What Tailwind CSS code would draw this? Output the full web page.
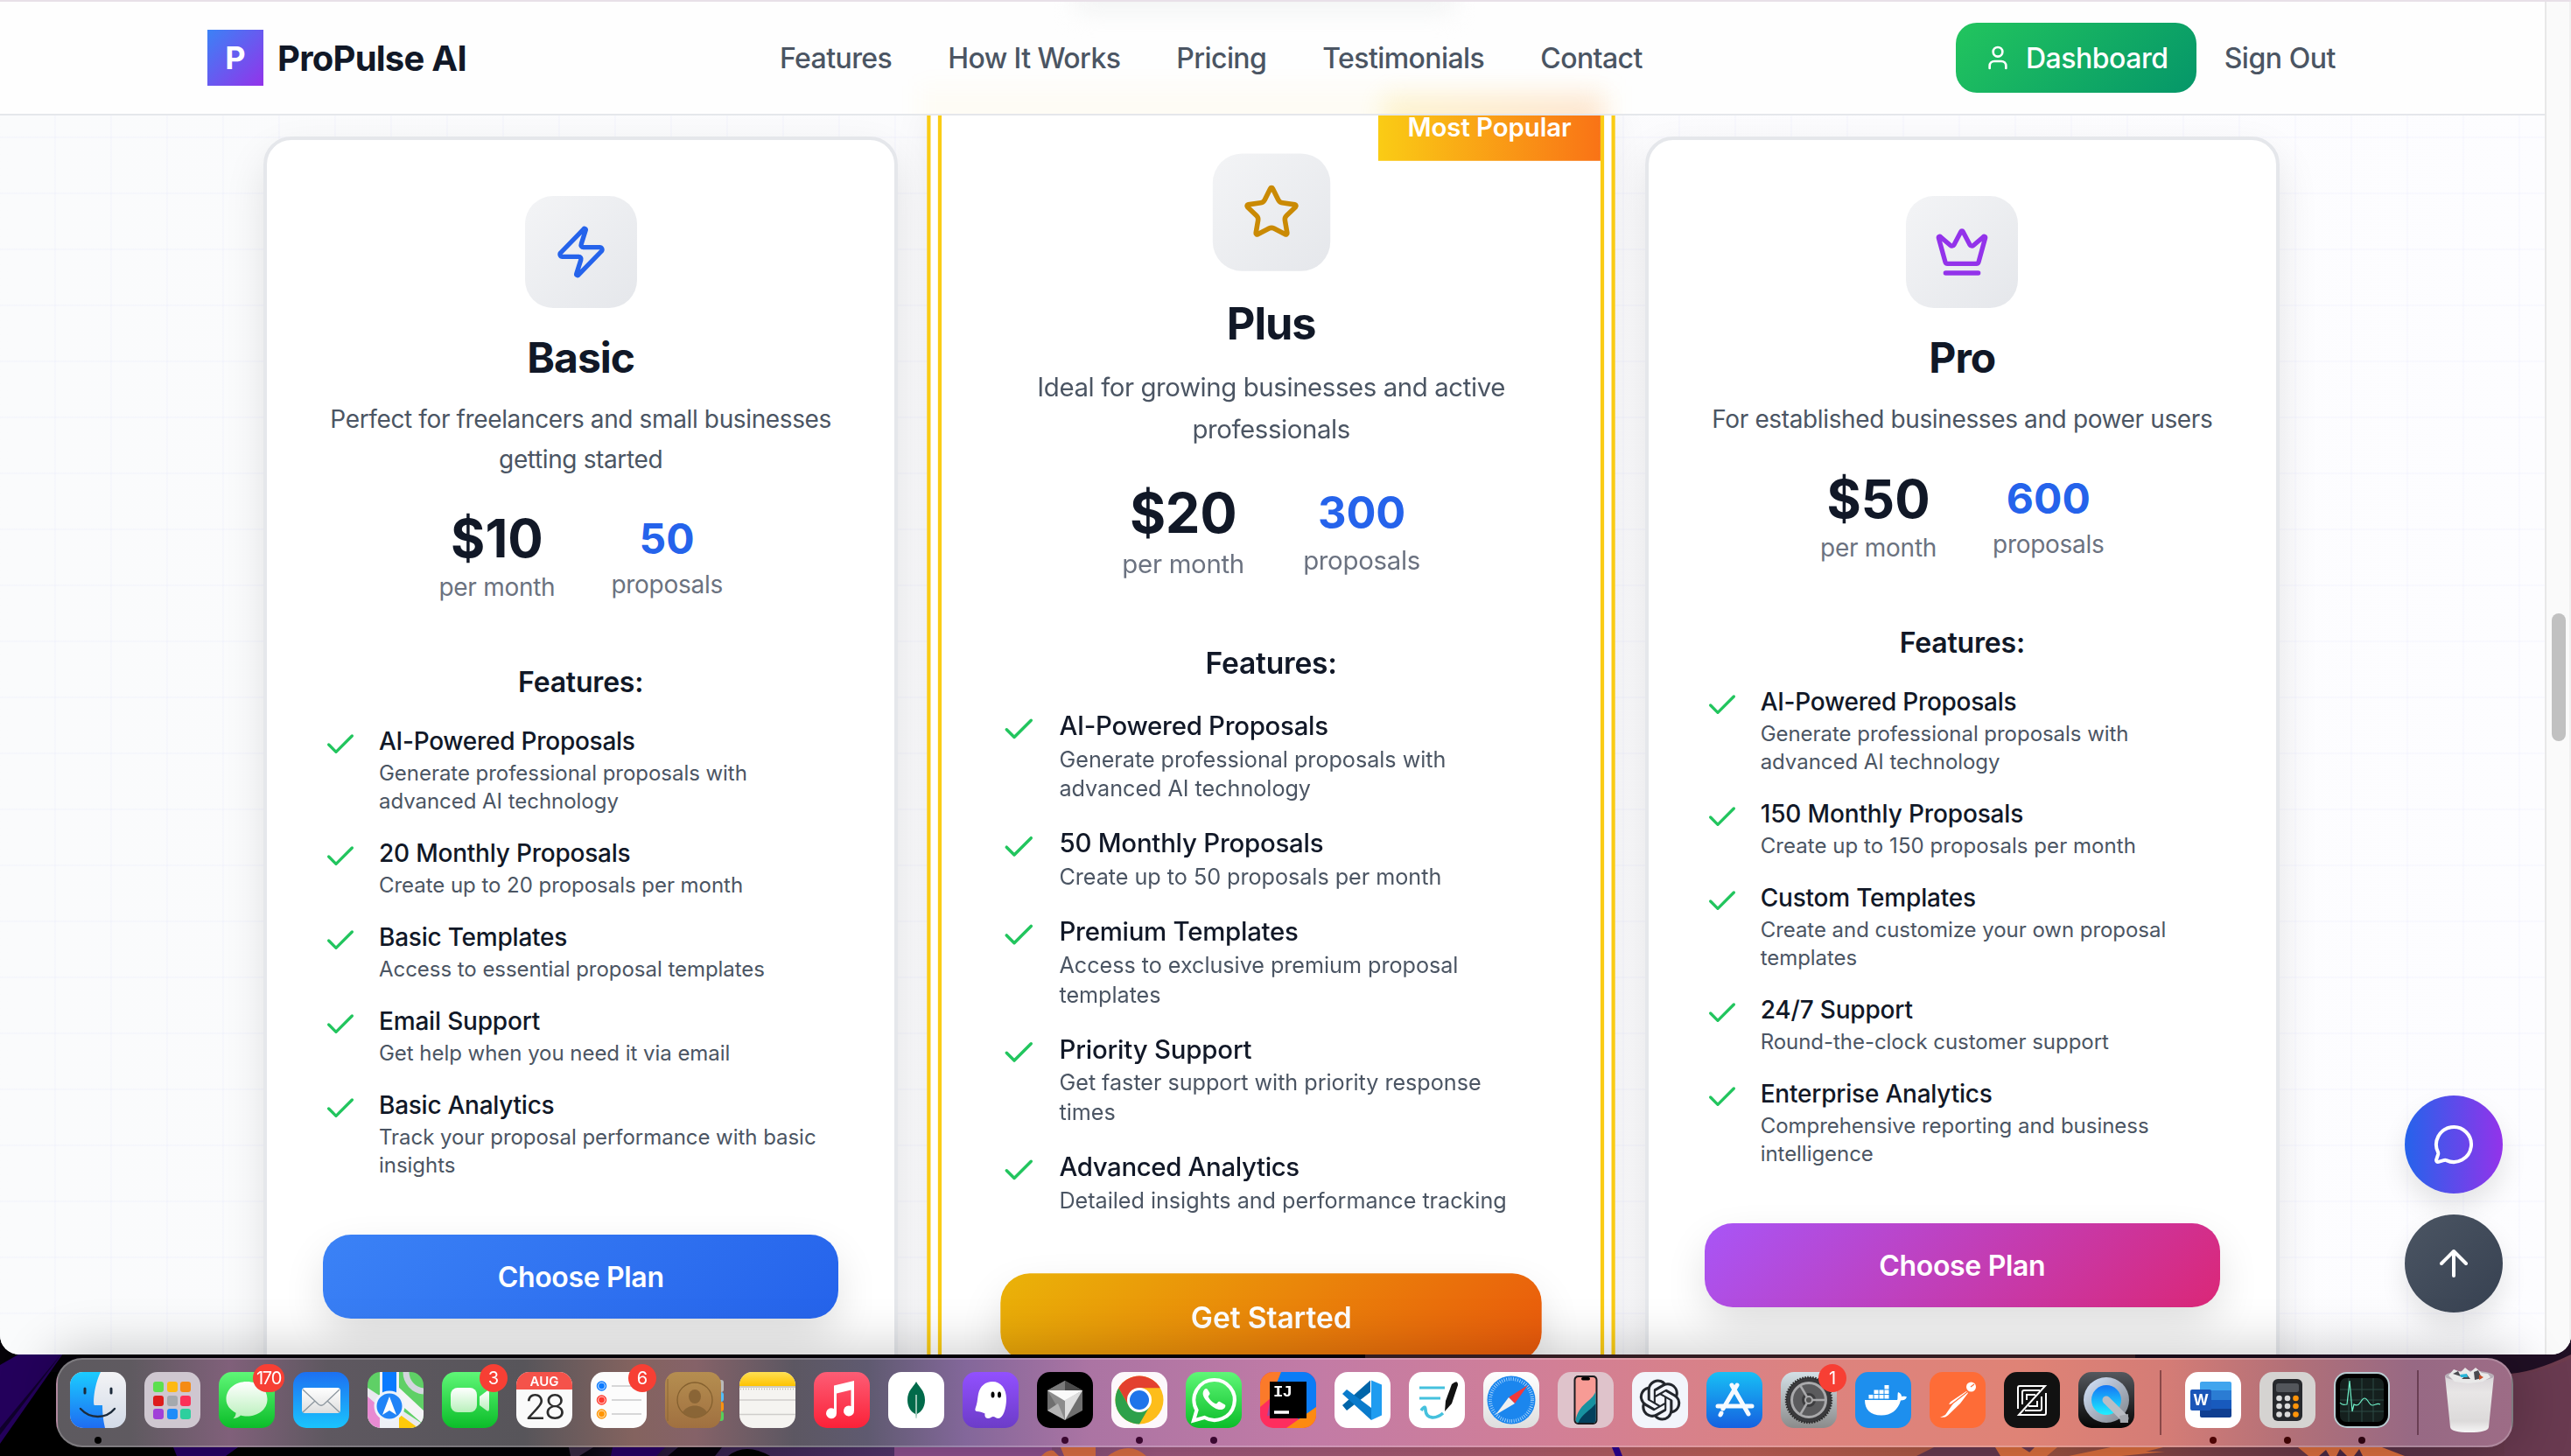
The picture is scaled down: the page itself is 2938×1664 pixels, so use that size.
<!DOCTYPE html>
<html lang="en">
<head>
<meta charset="utf-8">
<title>ProPulse AI - Pricing</title>
<script src="https://cdn.jsdelivr.net/npm/@tailwindcss/browser@4"></script>
</head>
<body class="overflow-hidden bg-black">
<!-- shared symbols and gradients -->
<svg class="absolute size-0">
  <symbol id="check" viewBox="0 0 24 24"><path d="M20 6 9 17l-5-5" fill="none" stroke="#22c55e" stroke-width="2" stroke-linecap="round" stroke-linejoin="round"/></symbol>
  <defs>
    <linearGradient id="gGreen" x1="0" y1="0" x2="0" y2="1"><stop offset="0" stop-color="#5ff777"/><stop offset="1" stop-color="#0bbd29"/></linearGradient>
    <linearGradient id="gBlueUp" x1="0" y1="0" x2="0" y2="1"><stop offset="0" stop-color="#1d70f2"/><stop offset="1" stop-color="#1ac4fd"/></linearGradient>
    <linearGradient id="gStore" x1="0" y1="0" x2="0" y2="1"><stop offset="0" stop-color="#18bff5"/><stop offset="1" stop-color="#1560e0"/></linearGradient>
    <linearGradient id="gWhite" x1="0" y1="0" x2="0" y2="1"><stop offset="0" stop-color="#ffffff"/><stop offset="1" stop-color="#dedede"/></linearGradient>
    <linearGradient id="gBubble" x1="0" y1="0" x2="0" y2="1"><stop offset="0" stop-color="#ffffff"/><stop offset="1" stop-color="#b9f0bb"/></linearGradient>
    <linearGradient id="gRed" x1="0" y1="0" x2="0" y2="1"><stop offset="0" stop-color="#fd5d75"/><stop offset="1" stop-color="#fb2138"/></linearGradient>
    <linearGradient id="gPurple" x1="0" y1="0" x2="0" y2="1"><stop offset="0" stop-color="#9250ff"/><stop offset="1" stop-color="#6c3cc8"/></linearGradient>
    <linearGradient id="gYellow" x1="0" y1="0" x2="0" y2="1"><stop offset="0" stop-color="#ffe054"/><stop offset="1" stop-color="#fec300"/></linearGradient>
    <linearGradient id="gBrown" x1="0" y1="0" x2="0" y2="1"><stop offset="0" stop-color="#b58e50"/><stop offset="1" stop-color="#a07040"/></linearGradient>
    <linearGradient id="gDark" x1="0" y1="0" x2="0" y2="1"><stop offset="0" stop-color="#54585e"/><stop offset="1" stop-color="#060606"/></linearGradient>
    <linearGradient id="gSteel" x1="0" y1="0" x2="1" y2="1"><stop offset="0" stop-color="#d6e6ff"/><stop offset="1" stop-color="#7e8288"/></linearGradient>
    <linearGradient id="gCyan" x1="0" y1="0" x2="0" y2="1"><stop offset="0" stop-color="#1475f5"/><stop offset="1" stop-color="#1ff0ff"/></linearGradient>
    <linearGradient id="gSettings" x1="0" y1="0" x2="0" y2="1"><stop offset="0" stop-color="#d3e0e6"/><stop offset="1" stop-color="#8b8b8b"/></linearGradient>
    <linearGradient id="gFace" x1="0" y1="0" x2="0" y2="1"><stop offset="0" stop-color="#1bccff"/><stop offset="1" stop-color="#1e6cf2"/></linearGradient>
    <linearGradient id="gFace2" x1="0" y1="0" x2="0" y2="1"><stop offset="0" stop-color="#f3f3f5"/><stop offset="1" stop-color="#d3dbe8"/></linearGradient>
    <linearGradient id="gCan" x1="0" y1="0" x2="0" y2="1"><stop offset="0" stop-color="#d9d4d8"/><stop offset="0.3" stop-color="#e8e6e6"/><stop offset="0.8" stop-color="#dcdada"/><stop offset="1" stop-color="#f6f6f6"/></linearGradient>
    <linearGradient id="gGround" x1="0" y1="0" x2="1" y2="0"><stop offset="0" stop-color="#000"/><stop offset="0.22" stop-color="#030106"/><stop offset="0.27" stop-color="#33204c"/><stop offset="0.35" stop-color="#54346c"/><stop offset="0.45" stop-color="#a05a80"/><stop offset="0.58" stop-color="#ad5c70"/><stop offset="0.68" stop-color="#bf6056"/><stop offset="0.78" stop-color="#a8583f"/><stop offset="0.86" stop-color="#7a4048"/><stop offset="0.93" stop-color="#5c3348"/><stop offset="1" stop-color="#6e3c4e"/></linearGradient>
  </defs>
</svg>

<div class="relative h-[1664px] w-[2938px] overflow-hidden bg-black font-['Inter',sans-serif]">
  <!-- wallpaper -->
  <svg class="absolute left-0 top-[1508px] h-[156px] w-[2938px]" viewBox="0 1508 2938 156">
    <rect y="1508" width="2938" height="156" fill="url(#gGround)"/>
    <rect y="1508" width="1560" height="60" fill="#050208"/><rect x="1560" y="1508" width="900" height="60" fill="#3a2026"/><rect x="2440" y="1508" width="270" height="60" fill="#1c0d1c"/>
    <path d="M0 1560 26 1545H60L0 1632zM42 1545 72 1547 0 1650v-26z" fill="#24005c"/>
    <path d="M72 1545 0 1640v-8z" fill="#10002c"/>
    <path d="M198 1654h74l-14 10h-56zM700 1654h60l-10 10h-52z" fill="#280066"/>
    <path d="M650 1654h28l-16 10h-10z" fill="#3a2a44"/>
    <path d="M763 1664 775 1654h50l-8 10z" fill="#06020c"/><path d="M832 1664q20-16 48 0z" fill="#000"/>
    <path d="M1022 1654h180v10h-180z" fill="#8f5090"/>
    <path d="M1190 1664q8-8 14-6l6 6zM1212 1654h40v10h-36zM1266 1664q24-18 44 0z" fill="#dc6f44"/>
    <path d="M1842 1654h8l4 10h-8z" fill="#2a0090"/>
    <path d="M2210 1654h120l-10 10h-130z" fill="#6a3a50"/>
    <path d="M2280 1654h30l16 10h-40zM2325 1654h26l-12 10h-24zM2412 1654h60l-20 5h22l-50 5h-60z" fill="#de703f"/>
    <path d="M2626 1654h96l26 10h-110z" fill="#de703f"/><path d="M2650 1664l8-7 4 7zM2670 1664l4-8 8 8zM2690 1664l6-8 4 8z" fill="#4d2a44"/>
    <path d="M2640 1508h298v40q-50 24-80 22l-218-18z" fill="#200f24"/>
    <path d="M2938 1552q-30 18-76 20v92h76z" fill="#693a50"/>
  </svg>

  <!-- browser window -->
  <div class="absolute left-0 top-0 flex h-[1548px] w-[2938px] overflow-hidden rounded-b-[22px] border-t-2 border-[#e8e0e8] bg-[#fdfdfe]">
    <main class="relative h-full flex-1 overflow-hidden bg-linear-to-r from-[#fafbfc] via-[#fbfbfd] to-[#fdfdff] pr-[2px]">
      <div class="absolute inset-0 bg-[linear-gradient(to_right,transparent_62px,#6366f107_62px),linear-gradient(to_bottom,#6366f107_2px,transparent_2px)] bg-[length:64px_64px] bg-[position:0_26px]"></div>

      <!-- navigation bar -->
      <header class="absolute inset-x-0 top-0 z-10 h-[130px] overflow-hidden border-b-2 border-[#e5e7eb] bg-[#fefefe] pr-[2px]">
        <div class="absolute -top-10 left-[1230px] h-[50px] w-[430px] bg-[#f1f3f3] blur-[14px]"></div>
        <div class="absolute top-[96px] left-[1050px] h-20 w-[796px] bg-[#facc15]/4 blur-[12px]"></div>
        <div class="absolute top-[106px] left-[1580px] h-20 w-[250px] bg-linear-to-r/srgb from-[#facc15] to-[#f97316] opacity-16 blur-[14px]"></div>
        <div class="relative mx-auto flex h-full w-[2560px] items-center justify-between px-16">
          <div class="flex items-center gap-4">
            <div class="flex size-16 items-center justify-center bg-linear-to-br/srgb from-[#3b82f6] to-[#9333ea] text-[36px] font-bold text-white">P</div>
            <span class="pt-0.5 text-[40px] font-bold tracking-[-0.76px] text-[#111827]">ProPulse AI</span>
          </div>
          <nav class="flex gap-16 pt-0.5 text-[32px] font-medium tracking-[-0.58px] text-[#4b5563]">
            <a>Features</a><a>How It Works</a><a>Pricing</a><a>Testimonials</a><a>Contact</a>
          </nav>
          <div class="flex items-center gap-8 text-[32px] font-medium tracking-[-0.46px]">
            <a class="flex h-20 items-center gap-4 rounded-[24px] bg-[linear-gradient(135deg,#22c55e,#059669)] px-8 text-white">
              <svg class="size-8" viewBox="0 0 24 24" fill="none" stroke="currentColor" stroke-width="2" stroke-linecap="round" stroke-linejoin="round"><path d="M19 21v-2a4 4 0 0 0-4-4H9a4 4 0 0 0-4 4v2"/><circle cx="12" cy="7" r="4"/></svg>
              <span class="pt-0.5">Dashboard</span></a>
            <a class="pt-0.5 text-[#4b5563]">Sign Out</a>
          </div>
        </div>
      </header>

      <!-- pricing cards -->
      <div class="relative mx-auto grid w-[2304px] grid-cols-3 gap-16 pt-[154px]">
        <article class="h-[1600px] rounded-[32px] border-4 border-[#e5e7eb] bg-white p-16 shadow-[0_20px_50px_-4px_rgba(0,0,0,0.12)]">
          <div class="flex flex-col items-center text-center">
            <div class="flex size-32 items-center justify-center rounded-[32px] bg-linear-to-br/srgb from-[#f3f4f6] to-[#e5e7eb]">
              <svg class="size-16" viewBox="0 0 24 24" fill="none" stroke="#2563eb" stroke-width="2" stroke-linecap="round" stroke-linejoin="round"><path d="M4 14a1 1 0 0 1-.78-1.63l9.9-10.2a.5.5 0 0 1 .86.46l-1.92 6.02A1 1 0 0 0 13 10h7a1 1 0 0 1 .78 1.63l-9.9 10.2a.5.5 0 0 1-.86-.46l1.92-6.02A1 1 0 0 0 11 14z"/></svg>
            </div>
            <h3 class="mt-[25px] text-[48px] leading-16 font-bold tracking-[-1px] text-[#111827]">Basic</h3>
            <p class="mt-4 text-[28px] leading-[45.5px] tracking-[-0.37px] text-[#4b5563]">Perfect for freelancers and small businesses<br>getting started</p>
            <div class="mt-8 flex items-center gap-16 text-[28px] leading-10 tracking-[-0.28px] text-[#6b7280]">
              <div><div class="text-[60px] leading-[71px] font-bold tracking-normal text-[#111827]">$10</div>per month</div>
              <div><div class="text-[48px] leading-16 font-bold tracking-normal text-[#2563eb]">50</div>proposals</div>
            </div>
            <h4 class="mt-[65px] text-[32px] leading-12 font-semibold tracking-[-0.2px] text-[#111827]">Features:</h4>
          </div>
          <ul class="mt-[23px] flex flex-col gap-[23px] text-[24px] leading-8 tracking-[-0.04px] text-[#4b5563]">
            <li class="flex gap-6"><svg class="mt-1 size-10 shrink-0"><use href="#check"/></svg><div><div class="text-[28px] leading-[41px] font-medium tracking-[-0.26px] text-[#111827]">AI-Powered Proposals</div>Generate professional proposals with<br>advanced AI technology</div></li>
            <li class="flex gap-6"><svg class="mt-1 size-10 shrink-0"><use href="#check"/></svg><div><div class="text-[28px] leading-[41px] font-medium tracking-[-0.22px] text-[#111827]">20 Monthly Proposals</div>Create up to 20 proposals per month</div></li>
            <li class="flex gap-6"><svg class="mt-1 size-10 shrink-0"><use href="#check"/></svg><div><div class="text-[28px] leading-[41px] font-medium tracking-[-0.22px] text-[#111827]">Basic Templates</div>Access to essential proposal templates</div></li>
            <li class="flex gap-6"><svg class="mt-1 size-10 shrink-0"><use href="#check"/></svg><div><div class="text-[28px] leading-[41px] font-medium tracking-[-0.18px] text-[#111827]">Email Support</div>Get help when you need it via email</div></li>
            <li class="flex gap-6"><svg class="mt-1 size-10 shrink-0"><use href="#check"/></svg><div><div class="text-[28px] leading-[41px] font-medium tracking-[-0.26px] text-[#111827]">Basic Analytics</div>Track your proposal performance with basic<br>insights</div></li>
          </ul>
          <button class="mt-[63px] h-24 w-full rounded-[32px] bg-[linear-gradient(135deg,#3b82f6,#2563eb)] pt-0.5 text-[32px] font-semibold tracking-[-0.34px] text-white shadow-[0_20px_50px_-4px_rgba(0,0,0,0.14)]">Choose Plan</button>
        </article>

        <article class="relative -mt-[52.4px] h-[1600px] origin-top scale-105 border-4 border-[#facc15] bg-white p-16 shadow-[0_20px_50px_-4px_rgba(0,0,0,0.12)] ring-4 ring-[#facc15] ring-offset-8 ring-offset-white">
          <div class="absolute top-0 right-0 bg-linear-to-r/srgb from-[#facc15] to-[#f97316] px-8 py-4 text-[28px] leading-10 font-semibold tracking-[-0.08px] text-white">Most Popular</div>
          <div class="flex flex-col items-center text-center">
            <div class="flex size-32 items-center justify-center rounded-[32px] bg-linear-to-br/srgb from-[#f3f4f6] to-[#e5e7eb]">
              <svg class="size-16" viewBox="0 0 24 24" fill="none" stroke="#ca8a04" stroke-width="2" stroke-linecap="round" stroke-linejoin="round"><path d="M11.525 2.295a.53.53 0 0 1 .95 0l2.31 4.679a2.123 2.123 0 0 0 1.595 1.16l5.166.756a.53.53 0 0 1 .294.904l-3.736 3.638a2.123 2.123 0 0 0-.611 1.878l.882 5.14a.53.53 0 0 1-.771.56l-4.618-2.428a2.122 2.122 0 0 0-1.973 0L6.396 21.01a.53.53 0 0 1-.77-.56l.881-5.139a2.122 2.122 0 0 0-.611-1.879L2.16 9.795a.53.53 0 0 1 .294-.906l5.165-.755a2.122 2.122 0 0 0 1.597-1.16z"/></svg>
            </div>
            <h3 class="mt-[25px] text-[48px] leading-16 font-bold tracking-[-1px] text-[#111827]">Plus</h3>
            <p class="mt-[15px] text-[28px] leading-[45.5px] tracking-[-0.39px] text-[#4b5563]">Ideal for growing businesses and active<br>professionals</p>
            <div class="mt-8 flex items-center gap-16 text-[28px] leading-10 tracking-[-0.28px] text-[#6b7280]">
              <div><div class="text-[60px] leading-[72px] font-bold tracking-[-0.4px] text-[#111827]">$20</div>per month</div>
              <div><div class="text-[48px] leading-16 font-bold tracking-[-0.2px] text-[#2563eb]">300</div>proposals</div>
            </div>
            <h4 class="mt-16 text-[32px] leading-12 font-semibold tracking-[-0.2px] text-[#111827]">Features:</h4>
          </div>
          <ul class="mt-6 flex flex-col gap-[23px] text-[24px] leading-8 tracking-[-0.04px] text-[#4b5563]">
            <li class="flex gap-6"><svg class="mt-1 size-10 shrink-0"><use href="#check"/></svg><div><div class="text-[28px] leading-[41px] font-medium tracking-[-0.26px] text-[#111827]">AI-Powered Proposals</div>Generate professional proposals with<br>advanced AI technology</div></li>
            <li class="flex gap-6"><svg class="mt-1 size-10 shrink-0"><use href="#check"/></svg><div><div class="text-[28px] leading-[41px] font-medium tracking-[-0.22px] text-[#111827]">50 Monthly Proposals</div>Create up to 50 proposals per month</div></li>
            <li class="flex gap-6"><svg class="mt-1 size-10 shrink-0"><use href="#check"/></svg><div><div class="text-[28px] leading-[41px] font-medium tracking-[-0.24px] text-[#111827]">Premium Templates</div>Access to exclusive premium proposal<br>templates</div></li>
            <li class="flex gap-6"><svg class="mt-1 size-10 shrink-0"><use href="#check"/></svg><div><div class="text-[28px] leading-[41px] font-medium tracking-[-0.18px] text-[#111827]">Priority Support</div>Get faster support with priority response<br>times</div></li>
            <li class="flex gap-6"><svg class="mt-1 size-10 shrink-0"><use href="#check"/></svg><div><div class="text-[28px] leading-[41px] font-medium tracking-[-0.34px] text-[#111827]">Advanced Analytics</div>Detailed insights and performance tracking</div></li>
          </ul>
          <button class="mt-[63px] h-24 w-full rounded-[32px] bg-[linear-gradient(135deg,#eab308,#ea580c)] pt-0.5 text-[32px] font-semibold tracking-[-0.1px] text-white shadow-[0_20px_50px_-4px_rgba(0,0,0,0.14)]">Get Started</button>
        </article>

        <article class="h-[1600px] rounded-[32px] border-4 border-[#e5e7eb] bg-white p-16 shadow-[0_20px_50px_-4px_rgba(0,0,0,0.12)]">
          <div class="flex flex-col items-center text-center">
            <div class="flex size-32 items-center justify-center rounded-[32px] bg-linear-to-br/srgb from-[#f3f4f6] to-[#e5e7eb]">
              <svg class="size-16" viewBox="0 0 24 24" fill="none" stroke="#9333ea" stroke-width="2" stroke-linecap="round" stroke-linejoin="round"><path d="M11.562 3.266a.5.5 0 0 1 .876 0L15.39 8.87a1 1 0 0 0 1.516.294L21.183 5.5a.5.5 0 0 1 .798.519l-2.834 10.246a1 1 0 0 1-.956.734H5.81a1 1 0 0 1-.957-.734L2.02 6.02a.5.5 0 0 1 .798-.519l4.276 3.664a1 1 0 0 0 1.516-.294z"/><path d="M5 21h14"/></svg>
            </div>
            <h3 class="mt-[25px] text-[48px] leading-16 font-bold tracking-[-1px] text-[#111827]">Pro</h3>
            <p class="mt-4 text-[28px] leading-[45.5px] tracking-[-0.37px] text-[#4b5563]">For established businesses and power users</p>
            <div class="mt-8 flex items-center gap-16 text-[28px] leading-10 tracking-[-0.28px] text-[#6b7280]">
              <div><div class="text-[60px] leading-[71px] font-bold tracking-normal text-[#111827]">$50</div>per month</div>
              <div><div class="text-[48px] leading-16 font-bold tracking-normal text-[#2563eb]">600</div>proposals</div>
            </div>
            <h4 class="mt-[65px] text-[32px] leading-12 font-semibold tracking-[-0.2px] text-[#111827]">Features:</h4>
          </div>
          <ul class="mt-[23px] flex flex-col gap-[23px] text-[24px] leading-8 tracking-[-0.04px] text-[#4b5563]">
            <li class="flex gap-6"><svg class="mt-1 size-10 shrink-0"><use href="#check"/></svg><div><div class="text-[28px] leading-[41px] font-medium tracking-[-0.26px] text-[#111827]">AI-Powered Proposals</div>Generate professional proposals with<br>advanced AI technology</div></li>
            <li class="flex gap-6"><svg class="mt-1 size-10 shrink-0"><use href="#check"/></svg><div><div class="text-[28px] leading-[41px] font-medium tracking-[-0.14px] text-[#111827]">150 Monthly Proposals</div><span class="tracking-[0.06px]">Create up to 150 proposals per month</span></div></li>
            <li class="flex gap-6"><svg class="mt-1 size-10 shrink-0"><use href="#check"/></svg><div><div class="text-[28px] leading-[41px] font-medium tracking-[-0.2px] text-[#111827]">Custom Templates</div>Create and customize your own proposal<br>templates</div></li>
            <li class="flex gap-6"><svg class="mt-1 size-10 shrink-0"><use href="#check"/></svg><div><div class="text-[28px] leading-[41px] font-medium tracking-[-0.18px] text-[#111827]">24/7 Support</div>Round-the-clock customer support</div></li>
            <li class="flex gap-6"><svg class="mt-1 size-10 shrink-0"><use href="#check"/></svg><div><div class="text-[28px] leading-[41px] font-medium tracking-[-0.22px] text-[#111827]">Enterprise Analytics</div>Comprehensive reporting and business<br>intelligence</div></li>
          </ul>
          <button class="mt-[63px] h-24 w-full rounded-[32px] bg-[linear-gradient(135deg,#a855f7,#db2777)] pt-0.5 text-[32px] font-semibold tracking-[-0.34px] text-white shadow-[0_20px_50px_-4px_rgba(0,0,0,0.14)]">Choose Plan</button>
        </article>
      </div>

      <!-- floating actions -->
      <div class="absolute right-12 bottom-12 flex flex-col gap-6">
        <button class="flex size-28 items-center justify-center rounded-full bg-linear-to-r/srgb from-[#2563eb] to-[#9333ea] shadow-[0_16px_30px_rgba(0,0,0,0.1)]"><svg class="size-12" viewBox="0 0 24 24" fill="none" stroke="#fff" stroke-width="2" stroke-linecap="round" stroke-linejoin="round"><path d="M2.992 16.342a2 2 0 0 1 .094 1.167l-1.065 3.29a1 1 0 0 0 1.236 1.168l3.413-.998a2 2 0 0 1 1.099.092 10 10 0 1 0-4.777-4.719"/></svg></button>
        <button class="flex size-28 items-center justify-center rounded-full bg-linear-to-br/srgb from-[#4b5563] to-[#374151] shadow-[0_16px_30px_rgba(0,0,0,0.1)]"><svg class="size-12" viewBox="0 0 24 24" fill="none" stroke="#fff" stroke-width="2" stroke-linecap="round" stroke-linejoin="round"><path d="m5 12 7-7 7 7M12 19V5"/></svg></button>
      </div>
    </main>
    <div class="h-full w-[30px] border-x-2 border-x-[#e8e8e8] border-r-[#f0f0f0] bg-[#fafafa] pt-[699px] pl-1.5"><div class="h-[146px] w-4 rounded-full bg-[#c1c1c1]"></div></div>
  </div>

  <!-- dock -->
  <div class="absolute left-[64px] top-[1552px] flex h-[102px] w-[2808px] items-start gap-[21px] rounded-[30px] border-2 border-white/20 bg-[linear-gradient(90deg,#5d5a5f_0%,#5f5a60_3%,#80607a_7%,#5e5860_11%,#57555a_19%,#84635f_23.5%,#856268_26%,#5c5762_30%,#5f5a70_33%,#83679a_37%,#ab74a3_42%,#c27ba6_51%,#d27f96_61%,#dd837e_72%,#df8376_80%,#d47c76_86%,#b27078_91%,#976984_96%,#9d6c86_100%)] pt-[14px] pl-[14px] shadow-[0_0_60px_10px_rgba(0,0,0,0.2)]">
    <!-- Finder -->
    <div class="relative size-16"><svg class="size-16" viewBox="0 0 64 64"><rect width="64" height="64" rx="15" fill="url(#gFace2)"/><path d="M35 0H15A15 15 0 0 0 0 15v34a15 15 0 0 0 15 15h25c-2-8-3-17-3-26h-9c-2 0-1-22 7-38z" fill="url(#gFace)"/><path d="M17 19v5M47 19v5" stroke="#1c2a3a" stroke-width="3" stroke-linecap="round"/><path d="M12 42c11 12 29 12 39 0" fill="none" stroke="#1c2a3a" stroke-width="2.4" stroke-linecap="round"/></svg><i class="absolute left-7 top-[74px] size-2 rounded-full bg-black"></i></div>
    <!-- Launchpad -->
    <div class="size-16"><svg class="size-16" viewBox="0 0 64 64"><rect width="64" height="64" rx="15" fill="#cfc7d0"/><g><rect x="10" y="11" width="12" height="12" rx="3" fill="#5ce04e"/><rect x="26" y="11" width="12" height="12" rx="3" fill="#fdb913"/><rect x="41" y="11" width="12" height="12" rx="3" fill="#f58b14"/><rect x="10" y="27" width="12" height="12" rx="3" fill="#dd1c1c"/><rect x="26" y="27" width="12" height="12" rx="3" fill="#a4a9ad"/><rect x="41" y="27" width="12" height="12" rx="3" fill="#fc3158"/><rect x="10" y="42" width="12" height="12" rx="3" fill="#a040d8"/><rect x="26" y="42" width="12" height="12" rx="3" fill="#1f8cf8"/><rect x="41" y="42" width="12" height="12" rx="3" fill="#2ecf9e"/></g></svg></div>
    <!-- Messages -->
    <div class="relative size-16"><svg class="size-16" viewBox="0 0 64 64"><rect width="64" height="64" rx="15" fill="url(#gGreen)"/><path d="M32 11c13.500 0 23.500 8.500 23.500 20S45.500 50.500 32 50.500c-2.500 0-5-.3-7-1-2 2-5 3.500-8.500 3.700 2-1.700 3-4 3.100-6.500C12.500 43 8.500 37.500 8.500 31c0-11.500 10-20 23.500-20z" fill="url(#gBubble)"/></svg><span class="absolute -top-[9px] left-[39px] flex h-8 w-9 items-center justify-center rounded-full bg-[#f73f34] text-[20px] tracking-[-1.2px] text-white">170</span></div>
    <!-- Mail -->
    <div class="size-16"><svg class="size-16" viewBox="0 0 64 64"><rect width="64" height="64" rx="15" fill="url(#gBlueUp)"/><rect x="10" y="18" width="44" height="29" rx="3.500" fill="url(#gWhite)"/><path d="M11 20l18 17q3 2.500 6 0l18-17M11 46l14-13M53 46 39 33" fill="none" stroke="#8d979f" stroke-width="1.300"/></svg></div>
    <!-- Maps -->
    <div class="size-16 overflow-hidden rounded-[15px]"><svg class="size-16" viewBox="0 0 64 64"><rect width="64" height="64" fill="#5fd066"/><path d="M0 18 64 60v4H0z" fill="#e9e9ee"/><path d="M0 28 16 42v22H0z" fill="#e88ad2"/><path d="M36 64V48l22 16z" fill="#fdca0a"/><path d="M34 16 64 44v16L34 34z" fill="#f4f4f6"/><path d="M44 0a22 22 0 0 0 20 22" fill="none" stroke="#d3d6dd" stroke-width="7"/><path d="M14 0h22v64H14z" fill="#eef1f6"/><path d="M17 0h16v40H17z" fill="#0a7aff"/><circle cx="25" cy="39" r="16" fill="#2184f7" stroke="#eef3fa" stroke-width="3"/><path d="m25 28 8 21-8-5-8 5z" fill="#fff"/></svg></div>
    <!-- FaceTime -->
    <div class="relative size-16"><svg class="size-16" viewBox="0 0 64 64"><rect width="64" height="64" rx="15" fill="url(#gGreen)"/><rect x="10" y="18" width="30" height="28" rx="8" fill="url(#gBubble)"/><path d="M43 28l8-6q3-2 3 2v18q0 4-3 2l-8-6z" fill="url(#gBubble)"/></svg><span class="absolute -top-[9px] left-[43px] flex size-8 items-center justify-center rounded-full bg-[#f73f34] text-[20px] text-white">3</span></div>
    <!-- Calendar -->
    <div class="flex size-16 flex-col overflow-hidden rounded-[15px] bg-[#fafafa] text-center"><div class="h-5 bg-[#f5524a] pt-px text-[15px] leading-5 font-semibold text-white">AUG</div><div class="-mt-px text-[40px] leading-[42px] font-light tracking-[-2px] text-[#2c2c2c]">28</div></div>
    <!-- Reminders -->
    <div class="relative size-16"><svg class="size-16" viewBox="0 0 64 64"><rect width="64" height="64" rx="15" fill="#fcfcfc"/><path d="M24 16h34M24 32h34M24 48h34" stroke="#c9c9cc" stroke-width="1.500"/><g stroke-width="1.500" fill="#fff"><circle cx="12.500" cy="16" r="5" stroke="#0a7aff"/><circle cx="12.500" cy="32" r="5" stroke="#ff3b30"/><circle cx="12.500" cy="48" r="5" stroke="#ff9500"/></g><circle cx="12.500" cy="16" r="3.400" fill="#0a7aff"/><circle cx="12.500" cy="32" r="3.400" fill="#ff3b30"/><circle cx="12.500" cy="48" r="3.400" fill="#ff9500"/></svg><span class="absolute -top-[9px] left-[43px] flex size-8 items-center justify-center rounded-full bg-[#f73f34] text-[20px] text-white">6</span></div>
    <!-- Contacts -->
    <div class="size-16"><svg class="size-16 overflow-visible" viewBox="0 0 64 64"><rect x="50" y="9" width="17" height="14" rx="3" fill="#b9b9b9"/><rect x="50" y="23" width="17" height="11" rx="3" fill="#53bdf7"/><rect x="50" y="34" width="17" height="11" rx="3" fill="#f99113"/><rect x="50" y="45" width="17" height="11" rx="3" fill="#56cf5c"/><rect width="64" height="64" rx="14" fill="url(#gBrown)"/><path d="M3 8v48" stroke="#8a6436" stroke-width="1"/><g stroke="#84602f" stroke-width="1.300" fill="none"><circle cx="34" cy="32" r="20"/></g><ellipse cx="34" cy="28" rx="7" ry="8" fill="#8a6536"/><path d="M20 46c6-10 22-10 28 0-7 8-21 8-28 0z" fill="#8a6536"/></svg></div>
    <!-- Notes -->
    <div class="size-16 overflow-hidden rounded-[15px]"><svg class="size-16" viewBox="0 0 64 64"><rect width="64" height="64" fill="#f5f4f1"/><rect width="64" height="16" fill="url(#gYellow)"/><path d="M0 17h64" stroke="#a9a38f" stroke-width="1"/><path d="M1 19.500h64" stroke="#b7b4ab" stroke-width="1.500" stroke-dasharray="1 2"/><path d="M0 32h64M0 48.500h64" stroke="#cfcdcb" stroke-width="1.300"/></svg></div>
    <!-- Music -->
    <div class="size-16"><svg class="size-16" viewBox="0 0 64 64"><rect width="64" height="64" rx="15" fill="url(#gRed)"/><path d="M23 15.500 46 10v34a6 6 0 1 1-3.500-5V20.500L26 24.500V47a6 6 0 1 1-3-5z" fill="#fff"/></svg></div>
    <!-- MongoDB -->
    <div class="size-16"><svg class="size-16" viewBox="0 0 64 64"><rect width="64" height="64" rx="15" fill="#fff"/><path d="M32 11c3 6 10 10 10 21 0 9-5 14-9 16l-1 5-1-5c-4-2-9-7-9-16 0-11 7-15 10-21z" fill="#016a4a"/><path d="M32 26v27" stroke="#c9e0d6" stroke-width="1.500"/></svg></div>
    <!-- Ghost -->
    <div class="size-16"><svg class="size-16" viewBox="0 0 64 64"><rect width="64" height="64" rx="15" fill="url(#gPurple)"/><path d="M34 11c10 0 16 8 16 20 0 11-4 22-9 22-3 0-4-2-6-2s-3 2-6 2-4-3-3.500-5.500C22 46 20 45 16 45c-3-1-1-4 0-8 1-4 1-7 2-12 2-9 8-14 16-14z" fill="#fff"/><ellipse cx="34.500" cy="26" rx="2" ry="3.600"/><ellipse cx="42" cy="26" rx="2" ry="3.600"/></svg></div>
    <!-- Cursor -->
    <div class="relative size-16"><svg class="size-16" viewBox="0 0 64 64"><rect width="64" height="64" rx="15" fill="#000"/><path d="m32 10 20 11v23L32 55 12 44V21z" fill="#6f6f6f"/><path d="m32 10 20 11H12z" fill="#4a4a4a"/><path d="M32 10v11H12z" fill="#7a7a7a"/><path d="M12 21l20 11v23z" fill="#8c8c8c"/><path d="m12 44 12-8 8 19z" fill="#b4b4b4"/><path d="M12 21h40L32 33z" fill="#fafafa"/><path d="M52 21 32 55V32z" fill="#dedede"/></svg><i class="absolute left-7 top-[74px] size-2 rounded-full bg-[#3a0830]"></i></div>
    <!-- Chrome -->
    <div class="relative size-16"><svg class="size-16" viewBox="0 0 64 64"><rect width="64" height="64" rx="15" fill="#fdf8fb"/><circle cx="32" cy="32" r="27.500" fill="#fdbd1a"/><path d="M8.200 18.200A27.500 27.500 0 0 1 55.800 18.200H32L20 39z" fill="#e3402f"/><path d="M8.200 18.200A27.500 27.500 0 0 0 32 59.500L43.900 38.900 20 38.900z" fill="#2da14a"/><circle cx="32" cy="32" r="14" fill="#fff"/><circle cx="32" cy="32" r="11" fill="#1f74ea"/></svg><i class="absolute left-7 top-[74px] size-2 rounded-full bg-[#3a0830]"></i></div>
    <!-- WhatsApp -->
    <div class="relative size-16"><svg class="size-16" viewBox="0 0 64 64"><rect width="64" height="64" rx="15" fill="url(#gGreen)"/><path d="M32.500 9a23 23 0 1 1-11 43L9 55.500 12.500 43.500A23 23 0 0 1 32.500 9z" fill="none" stroke="#fff" stroke-width="4.200"/><path d="M25 20c-1-1.500-3-1-4 .5-3 4-1 9 5 15s12 9 16.500 7c2.500-1 3.500-4 2.500-5l-6-3.500c-1-.5-2 0-3 1.500-1 1-1.500 1.200-3 .3-3-1.500-5.500-4-7-7-.5-1.200 0-1.500.8-2.500s1-1.500.5-2.500z" fill="#fff"/></svg><i class="absolute left-7 top-[74px] size-2 rounded-full bg-[#3a0830]"></i></div>
    <!-- IntelliJ IDEA -->
    <div class="relative size-16 overflow-hidden rounded-[15px]"><svg class="size-16" viewBox="0 0 64 64"><rect width="64" height="64" fill="#fe2d5e"/><path d="M22 0h42v40L46 56 14 26z" fill="#0b7cf6"/><path d="M0 0h24L12 30 0 40z" fill="#fb7a2a"/><path d="M14 20 28 10v40H8z" fill="#a04a9e"/><path d="M64 40v24H30z" fill="#fd8a10"/><rect x="11" y="11" width="42" height="42" fill="#000"/><path d="M16 46h17" stroke="#fff" stroke-width="3.500"/></svg><span class="absolute left-[15px] top-[13px] font-['Liberation_Mono',monospace] text-[19px] leading-5 font-bold tracking-[-1px] text-white">IJ</span></div>
    <!-- VS Code -->
    <div class="size-16"><svg class="size-16" viewBox="0 0 64 64"><rect width="64" height="64" rx="15" fill="#fff"/><path d="M9 38 41 9.500V23L14 44z" fill="#0065a9"/><path d="m9 25 5-5 28 21v14z" fill="#0a7bcc"/><path d="m42 9.500 12 5v35L42 55z" fill="#1f9cf0"/></svg></div>
    <!-- Goodnotes -->
    <div class="size-16"><svg class="size-16" viewBox="0 0 64 64"><rect width="64" height="64" rx="15" fill="#fff"/><path d="M12 18h29M12 30h24" stroke="#45c1dd" stroke-width="3.200"/><path d="M14 44c4-6 5-4 5 0 1 10 12 10 20 3" fill="none" stroke="#45c1dd" stroke-width="3.600"/><path d="M49 14q7-6 7 1l-7 21-8 9 1-12z" fill="#111"/></svg></div>
    <!-- Safari -->
    <div class="size-16"><svg class="size-16" viewBox="0 0 64 64"><rect width="64" height="64" rx="15" fill="url(#gWhite)"/><circle cx="32" cy="32" r="27.500" fill="#1b86ee"/><circle cx="32" cy="32" r="24" fill="none" stroke="#b7dcfb" stroke-width="4" stroke-dasharray=".8 1.800"/><path d="m51 15-15 21-7-7z" fill="#f2383a"/><path d="m14 49 15-20 7 7z" fill="#f0f0f0"/></svg></div>
    <!-- iPhone Mirroring -->
    <div class="size-16"><svg class="size-16" viewBox="0 0 64 64"><rect width="64" height="64" rx="15" fill="#dfc3cb"/><rect x="18.500" y="4" width="27" height="56" rx="5" fill="#1b1b1f"/><rect x="20.500" y="6" width="23" height="52" rx="3.500" fill="#f79b95"/><path d="M43.500 22c-4 12-20 14-23 34q1 2 3 2h17q3 0 3-3z" fill="#1792a0"/><path d="M43.500 36c-6 8-16 12-20 22h17q3 0 3-3z" fill="#04405c"/><rect x="27" y="6" width="10" height="3.500" rx="1.700"/></svg></div>
    <!-- ChatGPT -->
    <div class="size-16"><svg class="size-16" viewBox="0 0 64 64"><rect width="64" height="64" rx="15" fill="#f2f5fb"/><g transform="translate(8.500 8.500) scale(1.960)" fill="#22262c"><path d="M22.282 9.821a5.985 5.985 0 0 0-.516-4.910 6.046 6.046 0 0 0-6.510-2.900A6.065 6.065 0 0 0 4.981 4.182a5.985 5.985 0 0 0-3.998 2.900 6.046 6.046 0 0 0 .743 7.097 5.980 5.980 0 0 0 .511 4.911 6.051 6.051 0 0 0 6.515 2.900A5.985 5.985 0 0 0 13.260 24a6.056 6.056 0 0 0 5.772-4.206 5.990 5.990 0 0 0 3.998-2.900 6.056 6.056 0 0 0-.748-7.073zM13.260 22.430a4.476 4.476 0 0 1-2.876-1.041l.142-.080 4.778-2.758a.795.795 0 0 0 .393-.681v-6.737l2.020 1.169a.071.071 0 0 1 .038.052v5.583a4.504 4.504 0 0 1-4.495 4.493zM3.600 18.304a4.471 4.471 0 0 1-.535-3.014l.142.085 4.783 2.759a.771.771 0 0 0 .780 0l5.843-3.369v2.332a.080.080 0 0 1-.033.062L9.740 19.950a4.500 4.500 0 0 1-6.140-1.646zM2.341 7.896a4.485 4.485 0 0 1 2.365-1.973V11.600a.766.766 0 0 0 .388.677l5.815 3.354-2.020 1.169a.076.076 0 0 1-.071 0l-4.830-2.787A4.504 4.504 0 0 1 2.341 7.872zm16.596 3.856-5.833-3.388L15.119 7.200a.076.076 0 0 1 .071 0l4.830 2.791a4.494 4.494 0 0 1-.676 8.105v-5.678a.790.790 0 0 0-.407-.667zm2.011-3.024-.142-.085-4.774-2.782a.776.776 0 0 0-.785 0L9.409 9.230V6.897a.066.066 0 0 1 .028-.062l4.830-2.786a4.500 4.500 0 0 1 6.680 4.660zM8.307 12.863l-2.020-1.164a.080.080 0 0 1-.038-.057V6.075a4.500 4.500 0 0 1 7.376-3.454l-.142.080L8.704 5.460a.795.795 0 0 0-.393.681zm1.097-2.366 2.602-1.500 2.607 1.500v2.999l-2.597 1.500-2.607-1.500z"/></g></svg></div>
    <!-- App Store -->
    <div class="size-16"><svg class="size-16" viewBox="0 0 64 64"><rect width="64" height="64" rx="15" fill="url(#gStore)"/><g stroke="#f6faff" stroke-width="5" stroke-linecap="round"><path d="M35 15 19 42M29 15l19 33M13 39h39M16 49l1-2"/></g></svg></div>
    <!-- System Settings -->
    <div class="relative size-16"><svg class="size-16" viewBox="0 0 64 64"><rect width="64" height="64" rx="15" fill="url(#gSettings)"/><circle cx="32" cy="32" r="26" fill="#3a3a3c"/><circle cx="32" cy="32" r="26" fill="none" stroke="#2a2a2a" stroke-width="2.500" stroke-dasharray="1.500 1.500"/><circle cx="32" cy="32" r="19.500" fill="#5b5b5d" stroke="#a9a9ab" stroke-width="3"/><circle cx="32" cy="32" r="8" fill="#3c3c3e"/><path d="M32 32 22 15M32 32h20M32 32 22 49" stroke="#a9a9ab" stroke-width="2.500"/><circle cx="32" cy="32" r="4" fill="#555" stroke="#a9a9ab" stroke-width="2"/></svg><span class="absolute -top-[9px] left-[43px] flex size-8 items-center justify-center rounded-full bg-[#f73f34] text-[20px] text-white">1</span></div>
    <!-- Docker -->
    <div class="size-16"><svg class="size-16" viewBox="0 0 64 64"><rect width="64" height="64" rx="15" fill="#1d8fee"/><path d="M11 32h37c1-1 0-5 1-9 3 1 4 3 4 5 2-.5 5-.5 6 .5-1 3-4 4-7 4-3 11-11 17-22 17-13 0-19-7-19-17.500z" fill="#fff"/><path d="M15.500 26h5v4.500h-5zM21.500 26h5v4.500h-5zM27.500 26h5v4.500h-5zM33.500 26h5v4.500h-5zM21.500 20.500h5V25h-5zM27.500 20.500h5V25h-5zM33.500 20.500h5V25h-5zM33.500 15h5v4.500h-5z" fill="#fff"/></svg></div>
    <!-- Postman -->
    <div class="size-16"><svg class="size-16" viewBox="0 0 64 64"><rect width="64" height="64" rx="15" fill="#fe6c37"/><circle cx="47.500" cy="17" r="5.500" fill="#fff"/><path d="M42 22 24 34l-2 3 5-1-9 13-6 3 6-.5 3-2L35 36l9-12z" fill="#fff"/><path d="M43 23 25 37M47 17l4-3" stroke="#fe6c37" stroke-width="1.200"/></svg></div>
    <!-- Zed -->
    <div class="size-16"><svg class="size-16" viewBox="0 0 64 64"><rect width="64" height="64" rx="15" fill="#111"/><g fill="none" stroke="#fff" stroke-width="2"><path d="M16 42V18q0-2 2-2h29L17 49h29q2 0 2-2V24"/><path d="M21 37V23q0-2 2-2h18M43 28v14q0 2-2 2H24"/><path d="M26 32v-6h10M38 33v6H28"/></g></svg></div>
    <!-- QuickTime -->
    <div class="size-16"><svg class="size-16" viewBox="0 0 64 64"><rect width="64" height="64" rx="15" fill="url(#gDark)"/><circle cx="32" cy="32" r="26" fill="url(#gSteel)"/><circle cx="32" cy="32" r="17" fill="url(#gCyan)"/><path d="M32 32 53 53" stroke="#b9bdc4" stroke-width="9" stroke-linecap="round"/><path d="M47 50l10-2v10h-9z" fill="#a4a8ae"/></svg></div>
    <div class="-mt-0.5 ml-2 h-[74px] w-0.5 bg-[#8a4848]"></div>
    <!-- Word -->
    <div class="relative ml-1.5 size-16"><svg class="size-16" viewBox="0 0 64 64"><rect width="64" height="64" rx="15" fill="#fff"/><path d="M17 13q0-2 2-2h32q2 0 2 2v8H17z" fill="#41a5ee"/><path d="M17 21h36v11H17z" fill="#2b7cd3"/><path d="M17 32h36v10H17z" fill="#185abd"/><path d="M17 42h36v8q0 2-2 2H19q-2 0-2-2z" fill="#103f91"/><rect x="6" y="20" width="24" height="24" rx="2" fill="#1a56b8"/></svg><span class="absolute left-1.5 top-5 w-6 text-center text-[17px] leading-6 font-bold text-white">W</span><i class="absolute left-7 top-[74px] size-2 rounded-full bg-[#4d0404]"></i></div>
    <!-- Calculator -->
    <div class="relative size-16"><svg class="size-16" viewBox="0 0 64 64"><rect width="64" height="64" rx="15" fill="#d5d3d1"/><rect x="15" y="8" width="34" height="48" rx="6" fill="#27292d"/><rect x="19" y="13" width="26" height="10" rx="2.500" fill="#53565b"/><g fill="#dadada"><circle cx="22.500" cy="30" r="3.300"/><circle cx="32" cy="30" r="3.300"/><circle cx="22.500" cy="39" r="3.300"/><circle cx="32" cy="39" r="3.300"/><circle cx="22.500" cy="48.500" r="3.300"/><circle cx="32" cy="48.500" r="3.300"/></g><g fill="#ff9409"><circle cx="41.500" cy="30" r="3.300"/><circle cx="41.500" cy="39" r="3.300"/><circle cx="41.500" cy="48.500" r="3.300"/></g></svg><i class="absolute left-7 top-[74px] size-2 rounded-full bg-[#3d0404]"></i></div>
    <!-- Activity Monitor -->
    <div class="relative size-16"><svg class="size-16" viewBox="0 0 64 64"><rect width="64" height="64" rx="15" fill="#b9ccd2"/><rect x="2" y="2" width="60" height="60" rx="13" fill="#000"/><rect x="7" y="7" width="50" height="50" rx="7" fill="#15201e"/><path d="M7 20h50M7 32h50M7 45h50M17 7v50M32 7v50M45 7v50" stroke="#2c4a44" stroke-width="1"/><path d="M7 35c3 4 5 2 8 2l3-27 3 35 2-8c7 4 8-7 12-7s5 8 9 8 5-3 9-1" fill="none" stroke="#6ff0c8" stroke-width="1.200"/></svg><i class="absolute left-7 top-[74px] size-2 rounded-full bg-[#2c0410]"></i></div>
    <div class="-mt-0.5 ml-2.5 h-[74px] w-0.5 bg-[#6a3f54]"></div>
    <!-- Trash -->
    <svg class="-mt-1.5 ml-2 h-[76px] w-[58px]" viewBox="0 0 58 76"><path d="M1 10q28 12 56 0l-6 59q-1 6-22 6t-22-6z" fill="url(#gCan)"/><ellipse cx="29" cy="10.500" rx="28" ry="6" fill="#b9afb8"/><path d="m5 10 6-7 8 3 5-5 6 5 6-5 7 6 7 1 3 4-9 5-16 2-16-2z" fill="#e9e9e9"/><path d="m10 8 6-3 3 6zM34 6l5-2 4 9-8 2zM20 14l6-5 4 5z" fill="#4a4a50"/><path d="m18 9 8-1 1 4h-8z" fill="#29b5d8"/><path d="m40 9 5 3-5 3z" fill="#c8502a"/></svg>
  </div>
</div>
</body>
</html>
